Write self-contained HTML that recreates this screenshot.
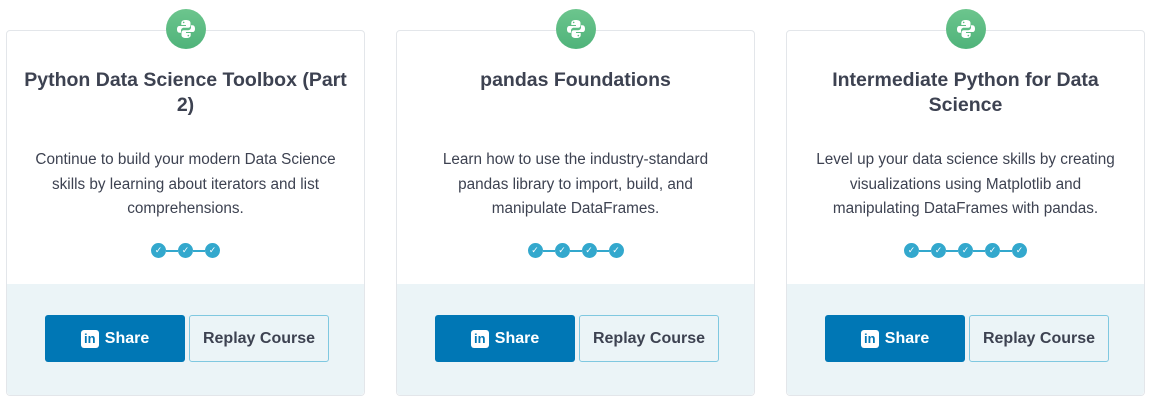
<!DOCTYPE html><html><head><style>
body{margin:0;background:#fff;font-family:"Liberation Sans",sans-serif;width:1158px;height:404px;position:relative;overflow:hidden}
.card{position:absolute;top:30px;width:357px;height:364px;border:1px solid #e3e6ea;border-radius:4px;background:#fff}
.ic{position:absolute;left:159px;top:-22px;width:40px;height:40px;border-radius:50%;background:linear-gradient(#6cc58d,#4fb37a)}
.ic svg{position:absolute;left:10px;top:10px}
.t{position:absolute;top:37px;left:12px;right:12px;text-align:center;font-weight:bold;font-size:19.5px;line-height:25px;color:#3d4251}
.d{position:absolute;top:117px;left:22px;right:22px;text-align:center;font-size:15.3px;line-height:24.5px;color:#3d4251}
.dots{position:absolute;top:212px;left:0;right:0;display:flex;justify-content:center;align-items:center}
.dot{width:15px;height:15px;border-radius:50%;background:#33a8cd;color:#fff;font-size:9px;line-height:15px;text-align:center}
.ln{width:12px;height:2px;background:#33a8cd}
.bot{position:absolute;left:0;right:0;bottom:0;height:111px;background:#ebf4f7;border-radius:0 0 4px 4px}
.sh{position:absolute;left:38px;top:31px;width:140px;height:47px;background:#0077b5;border-radius:3px;color:#fff;font-weight:bold;font-size:16px;display:flex;align-items:center;justify-content:center;gap:6px}
.li{width:18px;height:18px;background:#fff;border-radius:3px;color:#0077b5;font-size:13px;line-height:18px;text-align:center;font-weight:bold}
.rp{position:absolute;left:182px;top:31px;width:138px;height:45px;border:1px solid #7fc8e0;border-radius:3px;color:#3d4251;font-weight:bold;font-size:16px;display:flex;align-items:center;justify-content:center}
</style></head><body>
<svg width="0" height="0" style="position:absolute"><defs><g id="py"><path d="M9.8 1c-3 0-4.5 1-4.5 3v2h4.7v1H3.5C1.8 7 1 8.3 1 10.3s.8 3.5 2.5 3.5H5v-2.2c0-1.6 1.3-2.8 2.8-2.8h4.4c1.3 0 2.3-1 2.3-2.3V4c0-2-1.8-3-4.7-3z" fill="#fff"/><path d="M10.2 19c3 0 4.5-1 4.5-3v-2H10v-1h6.5c1.7 0 2.5-1.3 2.5-3.3s-.8-3.5-2.5-3.5H15v2.2c0 1.6-1.3 2.8-2.8 2.8H7.8c-1.3 0-2.3 1-2.3 2.3V16c0 2 1.8 3 4.7 3z" fill="#fff"/><circle cx="7.7" cy="3.4" r=".8" fill="#5bbb83"/><circle cx="12.3" cy="16.6" r=".8" fill="#5bbb83"/></g></defs></svg>
<div class="card" style="left:6px"><div class="ic"><svg width="20" height="20"><use href="#py"/></svg></div>
<div class="t">Python Data Science Toolbox (Part 2)</div>
<div class="d">Continue to build your modern Data Science skills by learning about iterators and list comprehensions.</div>
<div class="dots"><div class="dot">✓</div><div class="ln"></div><div class="dot">✓</div><div class="ln"></div><div class="dot">✓</div></div>
<div class="bot"><div class="sh"><div class="li">in</div>Share</div><div class="rp">Replay Course</div></div></div>
<div class="card" style="left:396px"><div class="ic"><svg width="20" height="20"><use href="#py"/></svg></div>
<div class="t">pandas Foundations</div>
<div class="d">Learn how to use the industry-standard pandas library to import, build, and manipulate DataFrames.</div>
<div class="dots"><div class="dot">✓</div><div class="ln"></div><div class="dot">✓</div><div class="ln"></div><div class="dot">✓</div><div class="ln"></div><div class="dot">✓</div></div>
<div class="bot"><div class="sh"><div class="li">in</div>Share</div><div class="rp">Replay Course</div></div></div>
<div class="card" style="left:786px"><div class="ic"><svg width="20" height="20"><use href="#py"/></svg></div>
<div class="t">Intermediate Python for Data Science</div>
<div class="d">Level up your data science skills by creating visualizations using Matplotlib and manipulating DataFrames with pandas.</div>
<div class="dots"><div class="dot">✓</div><div class="ln"></div><div class="dot">✓</div><div class="ln"></div><div class="dot">✓</div><div class="ln"></div><div class="dot">✓</div><div class="ln"></div><div class="dot">✓</div></div>
<div class="bot"><div class="sh"><div class="li">in</div>Share</div><div class="rp">Replay Course</div></div></div>
</body></html>
